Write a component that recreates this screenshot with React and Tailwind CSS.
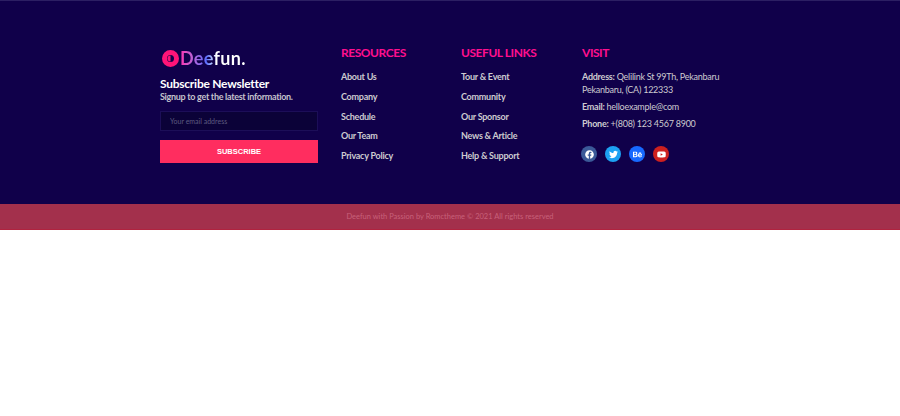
import React from "react";
import { FaFacebook, FaTwitter, FaBehance, FaYoutube } from "react-icons/fa";

const resources = ["About Us", "Company", "Schedule", "Our Team", "Privacy Policy"];
const usefulLinks = ["Tour & Event", "Community", "Our Sponsor", "News & Article", "Help & Support"];

const socials = [
  { icon: FaFacebook, bg: "bg-[#3b5998]" },
  { icon: FaTwitter, bg: "bg-[#1da1f2]" },
  { icon: FaBehance, bg: "bg-[#1769ff]" },
  { icon: FaYoutube, bg: "bg-[#cd201f]" },
];

const LinkColumn = ({ title, links, width }) => (
  <div className={width}>
    <h4 className="text-[12px] tracking-[-0.45px] leading-[17px] font-bold text-[#ff0f8f]">{title}</h4>
    <ul className="mt-[7px] flex flex-col gap-[2.75px]">
      {links.map((link) => (
        <li key={link} className="h-[17px] text-[9px] tracking-[-0.25px] leading-[17px] font-bold text-[#cdcbd0]">
          {link}
        </li>
      ))}
    </ul>
  </div>
);

const App = () => {
  return (
    <div className="min-h-[416px] bg-white font-['Lato','Noto_Sans',sans-serif]">
      <div className="h-[204px] bg-[#10004a] border-t border-[#2c1f63] pt-[43px]">
        <div className="flex ml-[160px]">
          <div className="w-[158px] mr-[23px]">
            <div className="flex items-center h-[28px] pl-[2px]">
              <svg width="17" height="17" viewBox="0 0 17 17" className="shrink-0">
                <circle cx="8.5" cy="8.5" r="6" fill="none" stroke="#ff1478" strokeWidth="5" />
                <path d="M8.5 5.5a3 3 0 0 0 0 6z" fill="#ff1478" />
              </svg>
              <span className="ml-[1px] text-[18px] leading-[28px] font-bold tracking-[0.3px] bg-gradient-to-r from-[#ff2bb0] via-[#5b6dff] via-40% to-white to-55% bg-clip-text text-transparent">
                Deefun.
              </span>
            </div>
            <h3 className="mt-[5px] text-[12px] tracking-[-0.25px] leading-[14px] font-bold text-white whitespace-nowrap">Subscribe Newsletter</h3>
            <p className="text-[9px] tracking-[-0.3px] leading-[11px] font-bold text-[#c4c2cc] whitespace-nowrap">Signup to get the latest information.</p>
            <input
              type="text"
              placeholder="Your email address"
              className="mt-[9px] block w-full h-[20px] px-[9px] bg-[#0b0238] border border-[#1c0e58] text-[7px] outline-none placeholder:text-[#5d5a80]"
            />
            <button className="mt-[9px] w-full h-[23px] bg-[#ff2d5f] text-white text-[7.5px] font-bold font-['Liberation_Sans',sans-serif]">
              SUBSCRIBE
            </button>
          </div>
          <LinkColumn title="RESOURCES" links={resources} width="w-[120px]" />
          <LinkColumn title="USEFUL LINKS" links={usefulLinks} width="w-[121px]" />
          <div className="w-[150px]">
            <h4 className="text-[12px] tracking-[-0.45px] leading-[17px] font-bold text-[#ff0f8f]">VISIT</h4>
            <div className="mt-[9px] text-[9px] tracking-[-0.25px] leading-[13px] text-[#cdcbd0]">
              <p><b>Address:</b> Qelilink St 99Th, Pekanbaru<br />Pekanbaru, (CA) 122333</p>
              <p className="mt-[4px]"><b>Email:</b> helloexample@com</p>
              <p className="mt-[4px]"><b>Phone:</b> +(808) 123 4567 8900</p>
            </div>
            <div className="mt-[16px] -ml-[1px] flex gap-[8px]">
              {socials.map(({ icon: Icon, bg }, i) => (
                <span key={i} className={`flex items-center justify-center w-[16px] h-[16px] rounded-full ${bg}`}>
                  <Icon className="w-[9px] h-[9px] text-white" />
                </span>
              ))}
            </div>
          </div>
        </div>
      </div>
      <div className="h-[26px] bg-[#a3304c] border-b border-[#b0233f] flex items-center justify-center">
        <p className="text-[7.5px] text-[#c7607a]">Deefun with Passion by Romctheme © 2021 All rights reserved</p>
      </div>
    </div>
  );
};

export default App;
